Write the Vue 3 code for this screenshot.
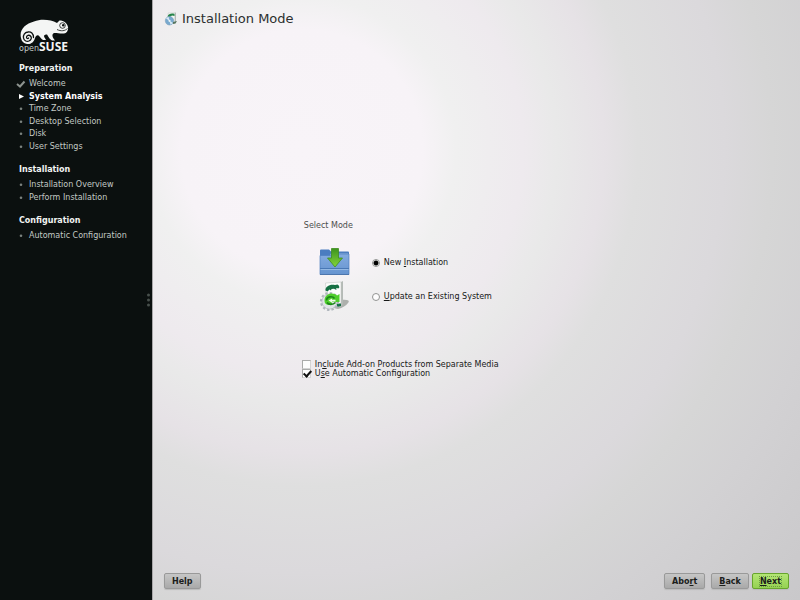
<script setup>
import { ref } from 'vue'

const mode = ref('new')
const addons = ref(false)
const automatic = ref(true)

const stages = [
  {
    title: 'Preparation',
    steps: [
      { name: 'Welcome', state: 'done' },
      { name: 'System Analysis', state: 'current' },
      { name: 'Time Zone', state: 'todo' },
      { name: 'Desktop Selection', state: 'todo' },
      { name: 'Disk', state: 'todo' },
      { name: 'User Settings', state: 'todo' }
    ]
  },
  {
    title: 'Installation',
    steps: [
      { name: 'Installation Overview', state: 'todo' },
      { name: 'Perform Installation', state: 'todo' }
    ]
  },
  {
    title: 'Configuration',
    steps: [{ name: 'Automatic Configuration', state: 'todo' }]
  }
]
</script>

<template>
  <div class="installer">
    <aside class="sidebar">
      <div class="brand">
        <svg class="chameleon" viewBox="0 0 50 26" aria-hidden="true">
          <path
            fill="#f4f5f4"
            d="M2 19C0 11 6 5 15 2.500C23-.5 32 1 38 4L40.500 1.500C45 1.500 48 4 49 8C49.500 11 48 14 45 14.500C41 15 37 13.500 35 14C33 15 33 17 34.500 19.500L36 21.500H33C30 20 29 16.500 28 15.500C27 15.500 25 15.500 25 17C25 18.500 26.500 19.500 27 21H24C22 20 21 17.500 19.500 16.500C17.500 16 17 17 16 19C15 23 12 25.500 8 25C4.500 24.500 2.500 22 2 19Z"
          />
          <path
            fill="none"
            stroke="#0c100f"
            stroke-width="1.300"
            stroke-linecap="round"
            d="M14.500 18.500C14.500 14.500 12 12.500 9 13C5.500 13.500 4 16 4.500 19C5 22 8 23 10 22C12.500 21 13 18.500 11.500 17C10 15.500 7.500 16.500 7.500 18.200C7.600 19.600 9 20 9.600 19"
          />
          <circle cx="43.500" cy="6.500" r="2.800" fill="#f4f5f4" stroke="#0c100f" stroke-width=".8" />
          <circle cx="44.200" cy="6.300" r="1.200" fill="#0c100f" />
          <path fill="none" stroke="#0c100f" stroke-width=".8" d="M38 10.500C42 12.500 46 12 48.500 9.500" />
        </svg>
        <div class="wordmark"><span class="open">open</span><span class="suse">SUSE</span></div>
      </div>

      <nav aria-label="Installation steps">
        <section v-for="stage in stages" :key="stage.title" class="stage">
          <h2>{{ stage.title }}</h2>
          <ol>
            <li v-for="step in stage.steps" :key="step.name" :class="step.state">
              <svg class="marker" viewBox="0 0 10 10" aria-hidden="true">
                <path v-if="step.state === 'done'" fill="none" stroke="#8d938f" stroke-width="2" d="M1 5L4 7.500L8.500 2.500" />
                <path v-else-if="step.state === 'current'" fill="#fff" d="M3 2L8 4.500L3 7Z" />
                <circle v-else cx="5" cy="4.800" r="1.300" fill="#7b827e" />
              </svg>
              <span>{{ step.name }}</span>
            </li>
          </ol>
        </section>
      </nav>

      <div class="splitter" aria-hidden="true"><i></i><i></i><i></i></div>
    </aside>

    <main class="page">
      <header class="title">
        <svg viewBox="0 0 14 14" aria-hidden="true">
          <path fill="#f3f5f3" stroke="#c4c8c5" stroke-width=".5" d="M4 1L11 .8V11L5 12Z" />
          <path fill="#b3b8b5" d="M10.800 .8L12 .5V10L10.800 11.500Z" />
          <path fill="#27844a" d="M3.500 4.500C4.500 1.500 8 1 10.500 2V4L8 3.500L5 5.500Z" />
          <circle cx="5.500" cy="8.800" r="4.200" fill="#79a9cf" stroke="#7b9fbb" stroke-width=".6" />
          <path fill="#d9eaf5" d="M5.500 8.800L2 6.500L4.500 4.800ZM5.500 8.800L9 11L6.500 12.800Z" />
          <circle cx="5.500" cy="8.800" r="1.100" fill="#eef5f7" />
          <path fill="#56755e" d="M9 10L13 9L11.500 11.500L9 12Z" />
        </svg>
        <h1>Installation Mode</h1>
      </header>

      <form id="mode-form" class="body" @submit.prevent>
        <div class="form">
          <fieldset class="modes">
            <legend>Select Mode</legend>
            <div class="mode">
              <svg viewBox="0 0 32 32" aria-hidden="true">
                <defs>
                  <linearGradient id="folder" x1="0" y1="0" x2="0" y2="1">
                    <stop offset="0" stop-color="#83abdf" />
                    <stop offset="1" stop-color="#6694d0" />
                  </linearGradient>
                  <linearGradient id="arrow" x1="0" y1="0" x2="0" y2="1">
                    <stop offset="0" stop-color="#3d931f" />
                    <stop offset="1" stop-color="#83d63a" />
                  </linearGradient>
                </defs>
                <path fill="#4a7dc0" d="M1 4.500Q1 3.500 2 3.500H10L12 5.500H29Q30 5.500 30 6.500V14H1Z" />
                <path fill="#a9c6e9" d="M12 7.500H29V9H11Z" />
                <path fill="url(#folder)" stroke="#4d7fbe" stroke-width=".7" d="M1 9.500H11L13 8H30V28.500H1Z" />
                <path stroke="#4978b5" stroke-width="1" d="M1 22.500H30" />
                <path stroke="#a4c6ea" stroke-width=".7" d="M1.500 23.500H29.500" />
                <path stroke="#466fa6" stroke-width=".8" d="M1 28.500H30" />
                <path fill="url(#arrow)" stroke="#3f8d1f" stroke-width=".8" d="M12.500 2.500H19.500V12H23.500L16 21L8.500 12H12.500Z" />
              </svg>
              <label>
                <input v-model="mode" type="radio" name="mode" value="new" />
                <span>New <u>I</u>nstallation</span>
              </label>
            </div>
            <div class="mode">
              <svg viewBox="0 0 32 32" aria-hidden="true">
                <path fill="#777c75" opacity=".55" d="M22 19.500L28 20Q31 20.500 29 23Q26 27 19 29L15 28Z" />
                <path fill="#b4bab6" d="M22 2L24 1V24L22 27Z" />
                <path fill="#fcfdfc" stroke="#c3c8c5" stroke-width=".6" d="M6.500 3L22 2V26L8 28Z" />
                <path fill="#167044" d="M6.500 10.500C6 6.500 11 3.800 16 5L18.500 4.500Q21 6 20 8.200L17 8.200L17.500 10L15 8.800L12.500 9L12 10.500L10.500 9.500L8.500 11.500Z" />
                <path fill="#167044" d="M17.500 23.500H22V26L18 27Z" />
                <circle cx="10.500" cy="21.500" r="8.200" fill="none" stroke="#b0b6bd" stroke-width="2.800" stroke-dasharray="2.300 1.990" />
                <circle cx="10.500" cy="21.500" r="7.600" fill="#dfe3e8" stroke="#a9b0b7" stroke-width=".6" />
                <path fill="#4fce2c" d="M5.500 21C5.500 15.500 9 13.500 13 13.500C15.500 13.500 17 14.500 18 15.500L20.500 14V22H13V24.500C9 25.500 5.500 24.500 5.500 21Z" />
                <path fill="none" stroke="#1c861a" stroke-width="1.600" d="M7.500 20.500C7.500 16.500 13.500 15.500 15.500 18.500M8 22.500C9.500 25 14 25 16.500 22.500" />
                <path fill="#effaea" d="M9.500 20.500L13 18.500V19.800H16.500V21.500H13V22.800Z" />
              </svg>
              <label>
                <input v-model="mode" type="radio" name="mode" value="update" />
                <span><u>U</u>pdate an Existing System</span>
              </label>
            </div>
          </fieldset>

          <div class="options">
            <label>
              <input v-model="addons" type="checkbox" name="addons" />
              <span>In<u>c</u>lude Add-on Products from Separate Media</span>
            </label>
            <label>
              <input v-model="automatic" type="checkbox" name="automatic" />
              <span>U<u>s</u>e Automatic Configuration</span>
            </label>
          </div>
        </div>
      </form>

      <footer class="actions">
        <button type="button" class="help">Help</button>
        <button type="button">Abo<u>r</u>t</button>
        <button type="button"><u>B</u>ack</button>
        <button type="submit" form="mode-form" class="next"><span><u>N</u>ext</span></button>
      </footer>
    </main>
  </div>
</template>

<style>
body {
  margin: 0;
}
</style>

<style scoped>
* {
  box-sizing: border-box;
}

.installer {
  display: flex;
  min-height: 100vh;
  font: 8px/12px "DejaVu Sans", sans-serif;
  color: #2c2f2e;
}

.sidebar {
  position: relative;
  flex: 0 0 19%;
  padding: 19px 0 0 19px;
  background: #0b100f;
  color: #c3c9c5;
}

.brand {
  width: 52px;
  height: 34px;
}

.chameleon {
  display: block;
  width: 50px;
  height: 26px;
}

.wordmark {
  display: flex;
  align-items: baseline;
  margin-top: -4px;
  line-height: 10px;
}

.open {
  font-size: 8px;
}

.suse {
  font: bold 12px/12px "Open Sans", sans-serif;
  color: #f4f5f4;
}

.stage {
  margin-top: 10px;
}

.stage + .stage {
  margin-top: 11px;
}

h2 {
  margin: 0 0 3px;
  font-size: 8px;
  line-height: 12px;
  color: #f1f4f2;
}

ol {
  margin: 0;
  padding: 0;
  list-style: none;
}

li {
  display: flex;
  align-items: center;
  height: 12px;
}

li:nth-child(even) {
  height: 13px;
}

.current {
  font-weight: bold;
  color: #fff;
}

.marker {
  width: 10px;
  height: 10px;
  margin-left: -3px;
  margin-right: 3px;
}

.splitter {
  position: absolute;
  top: 50%;
  right: 2px;
  display: grid;
  gap: 2px;
  transform: translateY(-50%);
}

.splitter i {
  width: 3px;
  height: 3px;
  border-radius: 50%;
  background: #48504c;
}

.page {
  flex: 1;
  display: flex;
  flex-direction: column;
  border-left: 1px solid #a9a7a9;
  background: radial-gradient(
    circle at 23% 25%,
    #f8f4f8 0%,
    #f7f3f7 18%,
    #f0f0f0 23%,
    #eeeaee 33%,
    #e9e9e9 38%,
    #e6e2e6 45%,
    #dfdfdf 50%,
    #dbd9dc 63%,
    #d6d6d6 70%,
    #d2d1d3 80%,
    #c9c8ca 100%
  );
}

.title {
  display: flex;
  align-items: center;
  gap: 4px;
  height: 38px;
  padding-left: 11px;
}

.title svg {
  width: 14px;
  height: 14px;
}

h1 {
  margin: 0;
  font-size: 13px;
  font-weight: normal;
  line-height: 16px;
}

.body {
  flex: 1;
  display: flex;
  align-items: center;
  padding: 0 0 2px 23%;
}

fieldset {
  margin: 0;
  padding: 0;
  border: 0;
}

legend {
  padding: 0 0 0 2px;
  margin-bottom: 14px;
  color: #4b4d4c;
}

.mode {
  display: flex;
  align-items: center;
  gap: 21px;
  height: 34px;
  padding-left: 17px;
}

.mode svg {
  width: 32px;
  height: 32px;
  margin-bottom: 2px;
}

label {
  display: flex;
  align-items: center;
  gap: 4px;
  color: #161817;
}

u {
  text-decoration: underline 1px;
  text-underline-offset: 1px;
}

input {
  appearance: none;
  flex: none;
  margin: 0;
  background: #fdfdfd;
  border: 1px solid #929492;
}

input[type="radio"] {
  width: 8px;
  height: 8px;
  border-radius: 50%;
}

input[type="radio"]:checked {
  background: radial-gradient(circle, #000 0 2px, #fff 3px);
}

input[type="checkbox"] {
  position: relative;
  width: 9px;
  height: 9px;
  border-color: #aaabaa #d4d4d4 #d4d4d4 #aaabaa;
}

input[type="checkbox"]:checked::after {
  content: "";
  position: absolute;
  left: 2px;
  top: -1px;
  width: 3px;
  height: 6px;
  border: solid #111;
  border-width: 0 2px 2px 0;
  transform: rotate(42deg);
}

.options {
  display: grid;
  margin-top: 46px;
}

.options label {
  height: 9px;
  line-height: 9px;
}

.actions {
  display: flex;
  align-items: center;
  gap: 6px;
  height: 38px;
  padding: 0 11px;
}

button {
  min-width: 36px;
  height: 16px;
  padding: 1px 7px 0;
  border: 1px solid #999;
  border-radius: 2px;
  background: linear-gradient(#c6c6c6, #a9a9a9);
  box-shadow: 0 1px 1px #bbb;
  font: bold 8px/10px "DejaVu Sans", sans-serif;
  color: #1b1d1b;
}

.help {
  margin-right: auto;
}

.next {
  margin-left: -3px;
  border-color: #67a52c;
  background: linear-gradient(#b3e575, #95d252);
}

.next span {
  outline: 1px dotted #6d9a44;
}
</style>
